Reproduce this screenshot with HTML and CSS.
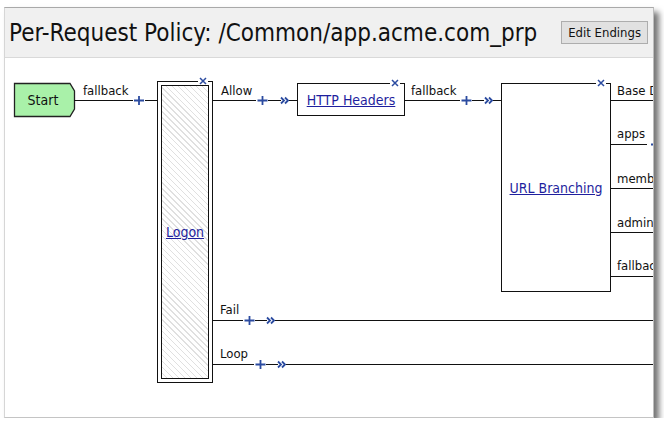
FILE: index.html
```html
<!DOCTYPE html>
<html>
    <head>
        <meta charset="utf-8">
        <title>Per-Request Policy</title>
        <link rel="stylesheet" href="styles.css">
    </head>
    <body>
        <div class="panel">
            <div class="header">
                <h1 class="title">Per-Request Policy: /Common/app.acme.com_prp</h1>
                <button class="edit">Edit Endings</button>
            </div>

            <div class="canvas">
                <!-- connectors -->
                <svg class="wires" width="648" height="360">
                    <defs>
                        <path id="plus" d="M-5 0H5M0 -4.5V4.5" class="blue"/>
                        <path id="fwd" d="M-4 -3L-1 0L-4 3M0 -3L3 0L0 3" class="blue"/>
                    </defs>
                    <polygon class="startShape" points="9.5,25.5 65,25.5 69.5,33 69.5,51 65,58.5 9.5,58.5"/>

                    <path class="line" d="M69 42.5H128 M140 42.5H152 M208 42.5H251 M263 42.5H276 M284 42.5H292 M400 42.5H455 M467 42.5H479 M488 42.5H496"/>
                    <use href="#plus" x="134" y="42.5"/>
                    <use href="#plus" x="257.5" y="42.5"/>
                    <use href="#fwd" x="280" y="42.5"/>
                    <use href="#plus" x="461.5" y="42.5"/>
                    <use href="#fwd" x="484" y="42.5"/>

                    <!-- url branching endings -->
                    <path class="line" d="M606 42.5H648 M606 86.5H642 M606 130.5H648 M606 174.5H648 M606 218.5H648"/>
                    <use href="#plus" x="651" y="86.5"/>

                    <!-- fail / loop -->
                    <path class="line" d="M208 262.5H238 M250 262.5H262 M270 262.5H648"/>
                    <use href="#plus" x="244.5" y="262.5"/>
                    <use href="#fwd" x="266" y="262.5"/>
                    <path class="line" d="M208 306.5H249 M261 306.5H273 M281 306.5H648"/>
                    <use href="#plus" x="255.5" y="306.5"/>
                    <use href="#fwd" x="277" y="306.5"/>
                </svg>

                <div class="start">Start</div>

                <div class="node logon">
                    <div class="hatch"><a href="#">Logon</a></div>
                    <span class="close"><svg width="10" height="8"><path d="M2 1L8 7M8 1L2 7"/></svg></span>
                </div>

                <div class="node box http">
                    <a href="#">HTTP Headers</a>
                    <span class="close"><svg width="10" height="8"><path d="M2 1L8 7M8 1L2 7"/></svg></span>
                </div>

                <div class="node box url">
                    <a href="#">URL Branching</a>
                    <span class="close"><svg width="10" height="8"><path d="M2 1L8 7M8 1L2 7"/></svg></span>
                </div>

                <span class="label l-fallback">fallback</span>
                <span class="label l-allow">Allow</span>
                <span class="label l-fallback2">fallback</span>
                <span class="label l-base">Base Domain</span>
                <span class="label l-apps">apps</span>
                <span class="label l-members">members</span>
                <span class="label l-admin">admin</span>
                <span class="label l-fallback3">fallback</span>
                <span class="label l-fail">Fail</span>
                <span class="label l-loop">Loop</span>
            </div>
        </div>
    </body>
</html>
```

FILE: styles.css
```css
body {
    margin: 0;
    background: #fff;
    font-family: "DejaVu Sans Condensed", "DejaVu Sans", sans-serif;
    color: #111;
}
.panel {
    margin: 7px 0 0 4px;
    width: 648px;
    background: #fff;
    border-top: 1px solid #a9a9a9;
    border-left: 1px solid #d6d6d6;
    border-right: 1px solid #bdbdbd;
    border-bottom: 1px solid #c4c4c4;
    box-shadow: 5px 5px 6px rgba(0, 0, 0, 0.55);
    overflow: hidden;
}
.header {
    height: 49px;
    background: #f0f0f0;
    border-bottom: 1px solid #d9d9d9;
    display: flex;
    align-items: center;
    justify-content: space-between;
    padding: 0 5px 0 4px;
}
.title {
    margin: 0;
    font-size: 24px;
    font-weight: normal;
    color: #111;
}
.edit {
    font-family: inherit;
    font-size: 13px;
    height: 23px;
    padding: 0 6px;
    background: #e1e1e1;
    border: 1px solid #adadad;
    color: #111;
}
.canvas {
    position: relative;
    height: 359px;
}
.wires {
    position: absolute;
    left: 0;
    top: 0;
}
.line {
    stroke: #111;
    stroke-width: 1;
    fill: none;
}
.blue {
    stroke: #2b4ba0;
    stroke-width: 1.8;
    fill: none;
}
.startShape {
    fill: #a9f1a9;
    stroke: #222;
    stroke-width: 1.3;
}
.start {
    position: absolute;
    left: 9px;
    top: 25px;
    width: 58px;
    height: 34px;
    display: flex;
    align-items: center;
    justify-content: center;
    font-size: 14px;
}
.node {
    position: absolute;
    box-sizing: border-box;
    border: 1px solid #111;
    background: #fff;
}
.node a {
    color: #1f1f9e;
    font-size: 14px;
}
.box {
    display: flex;
    align-items: center;
    justify-content: center;
}
.logon {
    left: 152px;
    top: 23px;
    width: 56px;
    height: 302px;
    padding: 3px;
}
.hatch {
    height: 100%;
    box-sizing: border-box;
    border: 1px solid #111;
    background: repeating-linear-gradient(45deg, #fff 0 3.2px, #e0e0e0 3.2px 4.2px);
    display: flex;
    align-items: center;
    justify-content: center;
}
.http {
    left: 292px;
    top: 25px;
    width: 108px;
    height: 33px;
}
.url {
    left: 496px;
    top: 25px;
    width: 110px;
    height: 209px;
}
.close {
    position: absolute;
    right: 4px;
    top: -5px;
    width: 10px;
    height: 8px;
    background: #fff;
    line-height: 0;
}
.close path {
    stroke: #2b4ba0;
    stroke-width: 1.5;
}
.label {
    position: absolute;
    font-size: 13px;
    line-height: 13px;
    white-space: nowrap;
}
.l-fallback { left: 78px; top: 26px; }
.l-allow { left: 216px; top: 26px; }
.l-fallback2 { left: 406px; top: 26px; }
.l-base { left: 612px; top: 26px; }
.l-apps { left: 612px; top: 69px; }
.l-members { left: 612px; top: 114px; }
.l-admin { left: 612px; top: 158px; }
.l-fallback3 { left: 612px; top: 201px; }
.l-fail { left: 215px; top: 245px; }
.l-loop { left: 215px; top: 289px; }
```
